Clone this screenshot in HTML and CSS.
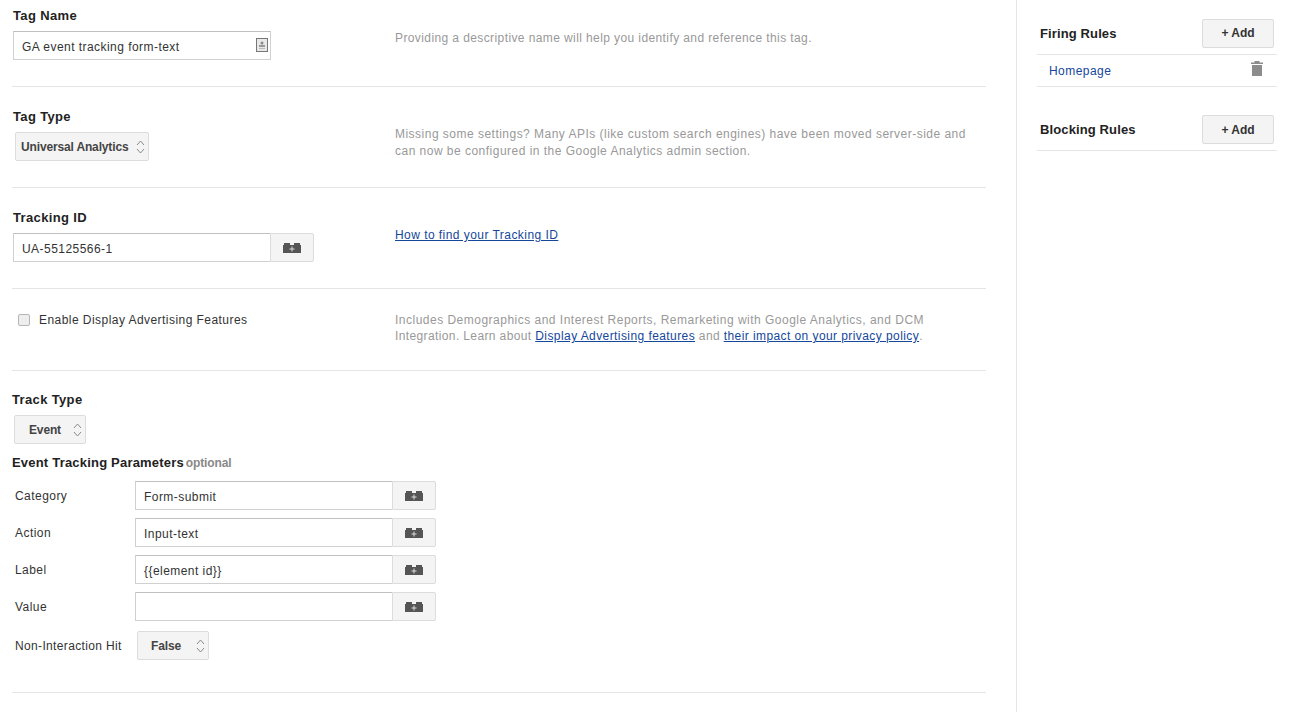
FILE: index.html
```html
<!DOCTYPE html>
<html lang="en">
<head>
<meta charset="utf-8">
<title>Tag</title>
<link rel="stylesheet" href="styles.css">
</head>
<body>
<svg class="defs" width="0" height="0" aria-hidden="true">
  <symbol id="brick" viewBox="0 0 18 10">
    <path fill="#555" d="M0 2h1V0h6v2h4V0h6v2h1v8H0z"/>
    <path fill="#ddd" d="M8.500 3.500h1v2h2v1h-2v2h-1v-2h-2v-1h2z"/>
  </symbol>
  <symbol id="updown" viewBox="0 0 9 16">
    <path fill="none" stroke="#8a8a8a" d="M1 6l3.500-4L8 6M1 10l3.500 4L8 10"/>
  </symbol>
</svg>
<div class="page">
  <main class="form">
    <section class="sec sec-name">
      <div class="col-left">
        <h3 class="title">Tag Name</h3>
        <div class="field name-field">
          <span class="val">GA event tracking form-text</span>
          <svg class="card" width="12" height="14" viewBox="0 0 12 14"><rect x="0.500" y="0.500" width="11" height="13" fill="#e8e8e8" stroke="#777"/><circle cx="6" cy="5" r="1.500" fill="#888"/><rect x="3" y="7" width="6" height="2" fill="#999"/><rect x="3" y="10" width="6" height="1" fill="#bbb"/></svg>
        </div>
      </div>
      <p class="desc desc-name">Providing a descriptive name will help you identify and reference this tag.</p>
    </section>

    <section class="sec sec-std">
      <div class="col-left">
        <h3 class="title">Tag Type</h3>
        <div class="sel sel-type"><span>Universal Analytics</span><svg class="ud" width="9" height="16"><use href="#updown"/></svg></div>
      </div>
      <p class="desc desc-type">Missing some settings? Many APIs (like custom search engines) have been moved server-side and can now be configured in the Google Analytics admin section.</p>
    </section>

    <section class="sec sec-std">
      <div class="col-left">
        <h3 class="title">Tracking ID</h3>
        <div class="combo combo-id">
          <div class="field grow"><span class="val">UA-55125566-1</span></div>
          <button class="macro"><svg width="18" height="10"><use href="#brick"/></svg></button>
        </div>
      </div>
      <p class="desc desc-id"><a href="#">How to find your Tracking ID</a></p>
    </section>

    <section class="sec sec-check">
      <div class="col-left check-row">
        <span class="box"></span>
        <span class="check-label">Enable Display Advertising Features</span>
      </div>
      <p class="desc desc-check"><span class="wide">Includes Demographics and Interest Reports, Remarketing with Google Analytics, and DCM</span> Integration. Learn about <a href="#">Display Advertising features</a> and <a href="#">their impact on your privacy policy</a>.</p>
    </section>

    <section class="sec sec-track">
      <div class="track">
        <h3 class="title title-track">Track Type</h3>
        <div class="sel sel-event"><span>Event</span><svg class="ud" width="9" height="16"><use href="#updown"/></svg></div>
        <h3 class="title title-params">Event Tracking Parameters <span class="opt">optional</span></h3>
        <div class="param">
          <label class="plabel">Category</label>
          <div class="combo combo-param"><div class="field grow"><span class="val">Form-submit</span></div><button class="macro"><svg width="18" height="10"><use href="#brick"/></svg></button></div>
        </div>
        <div class="param">
          <label class="plabel">Action</label>
          <div class="combo combo-param"><div class="field grow"><span class="val">Input-text</span></div><button class="macro"><svg width="18" height="10"><use href="#brick"/></svg></button></div>
        </div>
        <div class="param">
          <label class="plabel">Label</label>
          <div class="combo combo-param"><div class="field grow"><span class="val">{{element id}}</span></div><button class="macro"><svg width="18" height="10"><use href="#brick"/></svg></button></div>
        </div>
        <div class="param">
          <label class="plabel">Value</label>
          <div class="combo combo-param"><div class="field grow"></div><button class="macro"><svg width="18" height="10"><use href="#brick"/></svg></button></div>
        </div>
        <div class="param param-hit">
          <label class="plabel">Non-Interaction Hit</label>
          <div class="sel sel-false"><span>False</span><svg class="ud" width="9" height="16"><use href="#updown"/></svg></div>
        </div>
      </div>
    </section>
  </main>

  <aside class="side">
    <div class="rule-head rule-firing">
      <h3 class="title">Firing Rules</h3>
      <button class="add">+ Add</button>
    </div>
    <div class="rule-item">
      <a class="rule-link" href="#">Homepage</a>
      <svg class="trash" width="12" height="16" viewBox="0 0 12 16"><path fill="#8c8c8c" d="M0 4h12V2.500H8.500V1h-5v1.500H0zM1 5h10v11H1z"/></svg>
    </div>
    <div class="rule-head rule-blocking">
      <h3 class="title">Blocking Rules</h3>
      <button class="add">+ Add</button>
    </div>
  </aside>
</div>
</body>
</html>
```

FILE: styles.css
```css
* { box-sizing: border-box; }
html, body { margin: 0; height: 712px; overflow: hidden; background: #fff; }
body { font-family: "Liberation Sans", Arial, sans-serif; font-size: 12px; letter-spacing: 0.45px; color: #222; }
.defs { position: absolute; }
.page { display: flex; height: 712px; }
.form { width: 1017px; padding-left: 12px; padding-right: 30px; border-right: 1px solid #e5e5e5; flex: none; }
.sec { display: flex; border-bottom: 1px solid #e5e5e5; }
.col-left { width: 383px; flex: none; }
.title { margin: 0; font-size: 13px; line-height: 16px; font-weight: bold; color: #222; letter-spacing: 0.35px; }
.sec-name { height: 87px; padding-top: 8px; }
.sec-std { height: 101px; padding-top: 22px; }
.sec-std .title, .sec-name .title { padding-left: 1px; }
.sec-check { height: 82px; padding-top: 23px; }
.sec-track { height: 322px; padding-top: 21px; }
.desc { margin: 0; color: #999; line-height: 17px; width: 580px; }
.desc a { color: #15479b; text-decoration: underline; }
.desc-name { padding-top: 22px; letter-spacing: 0.4px; }
.desc-type { padding-top: 17px; letter-spacing: 0.48px; }
.desc-id { padding-top: 17px; }
.desc-check { line-height: 16px; letter-spacing: 0.38px; }
.desc-check .wide { letter-spacing: 0.49px; }
.desc-check a { letter-spacing: 0.42px; }
.field { display: flex; align-items: center; justify-content: space-between; height: 29px; padding: 2px 8px 0; border: 1px solid #d0d0d0; border-top-color: #c0c0c0; background: #fff; color: #333; }
.name-field { width: 258px; margin: 7px 0 0 1px; }
.card { display: block; margin: -3px -6px 0 0; }
.grow { flex: 1; }
.combo { display: flex; }
.combo-id { width: 301px; margin: 7px 0 0 1px; }
.combo-param { width: 301px; }
.combo .field { border-right: 0; }
.macro { width: 44px; height: 29px; padding: 0; border: 1px solid #dcdcdc; border-radius: 0 2px 2px 0; background: #f4f4f4; display: flex; align-items: center; justify-content: center; }
.macro svg { display: block; }
.sel { display: flex; align-items: center; height: 29px; border: 1px solid #dcdcdc; border-radius: 2px; background: #f4f4f4; color: #444; font-weight: bold; font-size: 12px; letter-spacing: -0.15px; position: relative; }
.ud { position: absolute; right: 3px; top: 6px; }
.sel-type { width: 134px; margin: 7px 0 0 3px; padding-left: 5px; }
.sel-event { width: 72px; margin: 7px 0 0 2px; padding-left: 14px; }
.sel-false { width: 72px; margin-left: 2px; padding-left: 13px; }
.check-row { display: flex; align-items: center; height: 16px; }
.box { width: 12px; height: 12px; margin-left: 6px; border: 1px solid #b5b5b5; border-radius: 2px; background: #eee; }
.check-label { margin-left: 9px; color: #333; }
.track { flex: 1; }
.title-params { margin-top: 11px; letter-spacing: 0.2px; }
.opt { color: #888; font-size: 12px; letter-spacing: -0.1px; margin-left: -2px; }
.param { display: flex; align-items: center; margin-bottom: 8px; }
.title-params + .param { margin-top: 10px; }
.plabel { width: 123px; padding-left: 3px; flex: none; color: #333; }
.param-hit { margin-top: 10px; }
.param-hit .plabel { letter-spacing: 0.35px; }
.side { flex: 1; padding: 0 17px 0 20px; }
.side .title { letter-spacing: 0.12px; }
.rule-head { display: flex; align-items: center; justify-content: space-between; border-bottom: 1px solid #e5e5e5; padding: 0 3px; }
.rule-firing { height: 55px; padding-top: 12px; }
.rule-firing .title { padding-top: 2px; }
.rule-blocking { height: 42px; margin-top: 22px; }
.add { width: 72px; height: 29px; padding: 0; border: 1px solid #dcdcdc; border-radius: 2px; background: #f4f4f4; color: #333; font: bold 12px "Liberation Sans", Arial, sans-serif; letter-spacing: 0; }
.rule-item { display: flex; align-items: center; justify-content: space-between; height: 32px; padding: 0 14px 0 12px; border-bottom: 1px solid #e5e5e5; }
.rule-link { color: #15479b; text-decoration: none; }
.trash { margin-top: -5px; }
```
